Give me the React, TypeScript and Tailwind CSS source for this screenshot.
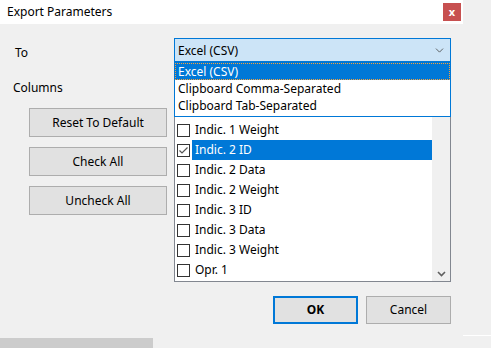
import { ChevronDown } from "lucide-react";

const columns = [
  { name: "Indic. 1 ID", checked: false },
  { name: "Indic. 1 Data", checked: false },
  { name: "Indic. 1 Weight", checked: false },
  { name: "Indic. 2 ID", checked: true, selected: true },
  { name: "Indic. 2 Data", checked: false },
  { name: "Indic. 2 Weight", checked: false },
  { name: "Indic. 3 ID", checked: false },
  { name: "Indic. 3 Data", checked: false },
  { name: "Indic. 3 Weight", checked: false },
  { name: "Opr. 1", checked: false },
];

const options = ["Excel (CSV)", "Clipboard Comma-Separated", "Clipboard Tab-Separated"];

function CheckBox({ checked }: { checked: boolean }) {
  return (
    <div className="w-[13px] h-[13px] border border-[#333333] bg-white flex items-center justify-center shrink-0">
      {checked && (
        <svg width="11" height="11" viewBox="0 0 11 11">
          <path d="M1.5 5.5 L4 8 L9.5 2.5" fill="none" stroke="#555555" strokeWidth="1.2" />
        </svg>
      )}
    </div>
  );
}

function SideButton({ label }: { label: string }) {
  return (
    <button className="w-[138px] h-[29px] bg-[#e1e1e1] border border-[#adadad] text-[12px] text-black">
      {label}
    </button>
  );
}

export default function App() {
  return (
    <div
      className="relative w-[491px] h-[348px] bg-[#f0f0f0] overflow-hidden flex text-black text-[12px]"
      style={{ fontFamily: '"Segoe UI", "Noto Sans", sans-serif' }}
    >
      <div className="w-[463px] flex flex-col">
        {/* title bar */}
        <div className="h-[24px] bg-white flex items-center justify-between pl-[7px] pr-[2px]">
          <span className="text-[12px]">Export Parameters</span>
          <div className="w-[18px] h-[18px] bg-[#c75050] text-white font-bold text-[11px] leading-none flex items-center justify-center pb-[2px]">
            x
          </div>
        </div>

        {/* To row */}
        <div className="flex mt-[14px] h-[24px] items-center">
          <div className="w-[174px] pl-[15px] pt-[5px] leading-[16px]">To</div>
          <div className="w-[277px] h-[24px] bg-[#cce4f7] border border-[#0078d7] flex items-center justify-between pl-[3px] pr-[4px]">
            <span className="leading-[16px] pt-[1px]">Excel (CSV)</span>
            <ChevronDown size={13} strokeWidth={1.5} className="text-[#444]" />
          </div>
        </div>

        {/* Columns */}
        <div className="flex mt-[16px]">
          <div className="w-[174px] flex flex-col">
            <div className="pl-[13px] pt-[2px] leading-[16px]">Columns</div>
            <div className="flex flex-col gap-[10px] pl-[29px] mt-[12px]">
              <SideButton label="Reset To Default" />
              <SideButton label="Check All" />
              <SideButton label="Uncheck All" />
            </div>
          </div>
          <div className="w-[277px] h-[204px] border border-[#828790] bg-white flex">
            <div className="flex-1 flex flex-col pl-[2px] pt-[1px]">
              {columns.map((c) => (
                <div key={c.name} className="h-[20px] flex items-center">
                  <CheckBox checked={c.checked} />
                  <div
                    className={`ml-[2px] pl-[3px] flex-1 h-[20px] flex items-center ${
                      c.selected ? "bg-[#0078d7] text-white" : ""
                    }`}
                  >
                    {c.name}
                  </div>
                </div>
              ))}
            </div>
            <div className="w-[18px] bg-[#f0f0f0] flex flex-col justify-end items-center pb-[4px]">
              <svg width="9" height="6" viewBox="0 0 9 6">
                <path d="M1 1 L4.5 4.5 L8 1" fill="none" stroke="#606060" strokeWidth="1.6" />
              </svg>
            </div>
          </div>
        </div>

        {/* OK / Cancel */}
        <div className="flex justify-end gap-[8px] mt-[14px] pr-[12px]">
          <button className="w-[85px] h-[28px] bg-[#e1e1e1] border-2 border-[#0078d7] font-bold">
            OK
          </button>
          <button className="w-[85px] h-[28px] bg-[#e1e1e1] border border-[#adadad]">Cancel</button>
        </div>

        <div className="mt-[14px] w-[153px] h-[10px] bg-[#cccccc]" />
      </div>

      <div className="flex-1 flex flex-col">
        <div className="mt-[335px] h-[1px] bg-white" />
      </div>

      {/* dropdown popup */}
      <div className="absolute left-[174px] top-[62px] w-[277px] h-[55px] bg-white border border-[#0078d7] flex flex-col">
        {options.map((o, i) => (
          <div
            key={o}
            className={
              i === 0
                ? "h-[17px] leading-[15px] pl-[2px] bg-[#0078d7] text-white border border-dotted border-[#f7a13a] overflow-hidden"
                : "h-[17px] leading-[16px] pl-[3px] pt-[1px] overflow-hidden"
            }
          >
            {o}
          </div>
        ))}
      </div>
    </div>
  );
}
